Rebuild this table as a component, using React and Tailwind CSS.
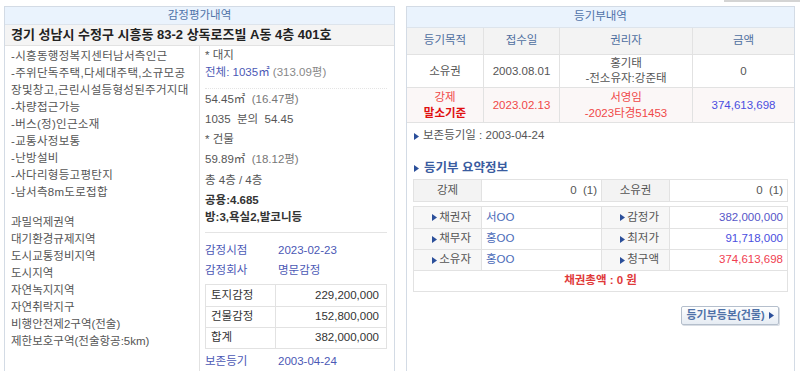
import React from "react";

const font = { fontFamily: '"Liberation Sans", "Noto Sans CJK KR", sans-serif' };

const Tri = ({ className = "" }) => (
  <svg width="5" height="7" viewBox="0 0 5 7" className={className}>
    <path d="M0 0 L5 3.5 L0 7 Z" fill="#2b4f9a" />
  </svg>
);

const leftLines = [
  "-시흥동행정복지센터남서측인근",
  "-주위단독주택,다세대주택,소규모공",
  "장및창고,근린시설등형성된주거지대",
  "-차량접근가능",
  "-버스(정)인근소재",
  "-교통사정보통",
  "-난방설비",
  "-사다리형등고평탄지",
  "-남서측8m도로접합",
];

const zones = [
  "과밀억제권역",
  "대기환경규제지역",
  "도시교통정비지역",
  "도시지역",
  "자연녹지지역",
  "자연취락지구",
  "비행안전제2구역(전술)",
  "제한보호구역(전술항공:5km)",
];

const Appraisal = () => (
  <div className="w-[391px] h-[366px] border border-[#d3dbe5] flex flex-col bg-white">
    <div className="h-[21px] bg-[#eaf3fd] border-b border-[#dde4ec] flex items-center justify-center text-[11.5px] text-[#4f72a8]">
      감정평가내역
    </div>
    <div className="h-[25px] bg-[#f4f4f4] border-b border-[#e2e2e2] flex items-center pl-[6px] text-[13px] font-bold text-[#222]">
      경기 성남시 수정구 시흥동 83-2 상독로즈빌 A동 4층 401호
    </div>
    <div className="flex flex-1 text-[11.5px] text-[#555]">
      <div className="w-[195px] border-r border-[#e2e2e2] pl-[6px] pt-[2px] leading-[17px]">
        {leftLines.map((l) => (
          <div key={l} className="whitespace-nowrap tracking-[0.3px]">{l}</div>
        ))}
        <div className="h-[13px]" />
        {zones.map((l) => (
          <div key={l} className="whitespace-nowrap">{l}</div>
        ))}
      </div>
      <div className="flex-1 pl-[5px] pr-[7px]">
        <div className="h-[18px] leading-[18px]">* 대지</div>
        <div className="h-[17px] leading-[17px]">
          <span className="text-[#4b58b5]">전체: 1035㎡</span>
          <span className="text-[#888]"> (313.09평)</span>
        </div>
        <div className="h-[8px] border-b border-dotted border-[#e4e4e4]" />
        <div className="h-[20px] leading-[20px]">
          54.45㎡ <span className="text-[#777]">&nbsp;(16.47평)</span>
        </div>
        <div className="h-[20px] leading-[20px]">1035 &nbsp;분의 &nbsp;54.45</div>
        <div className="h-[21px] leading-[21px]">* 건물</div>
        <div className="h-[19px] leading-[19px]">
          59.89㎡ <span className="text-[#777]">&nbsp;(18.12평)</span>
        </div>
        <div className="h-[22px] leading-[22px]">총 4층 / 4층</div>
        <div className="h-[19px] leading-[19px] font-bold text-[#333]">공용:4.685</div>
        <div className="h-[15px] leading-[15px] font-bold text-[#333]">방:3,욕실2,발코니등</div>
        <div className="h-[8px] border-b border-[#e4e4e4]" />
        <div className="h-[7px]" />
        <div className="h-[20px] leading-[20px] flex text-[#4b58b5]">
          <span className="w-[73px]">감정시점</span>
          <span>2023-02-23</span>
        </div>
        <div className="h-[21px] leading-[21px] flex text-[#4b58b5]">
          <span className="w-[73px]">감정회사</span>
          <span>명문감정</span>
        </div>
        <div className="mt-[3px] border border-[#e2e2e2] text-[#333]">
          {[
            ["토지감정", "229,200,000"],
            ["건물감정", "152,800,000"],
            ["합계", "382,000,000"],
          ].map(([k, v], i) => (
            <div key={k} className={`flex h-[21px] items-center ${i ? "border-t border-[#e2e2e2]" : ""}`}>
              <div className="w-[70px] h-full flex items-center pl-[5px] border-r border-[#e2e2e2]">{k}</div>
              <div className="flex-1 text-right pr-[7px]">{v}</div>
            </div>
          ))}
        </div>
        <div className="h-[22px] leading-[24px] flex text-[#4b58b5]">
          <span className="w-[73px]">보존등기</span>
          <span>2003-04-24</span>
        </div>
      </div>
    </div>
  </div>
);

const th = "flex items-center justify-center border-r border-[#e2e2e2]";

const Registry = () => (
  <div className="w-[389px] h-[366px] border border-[#d3dbe5] flex flex-col bg-white text-[11.5px] text-[#555]">
    <div className="h-[21px] bg-[#eaf3fd] border-b border-[#dde4ec] flex items-center justify-center text-[#4f72a8]">
      등기부내역
    </div>
    <div className="flex h-[27px] bg-[#f3f3f3] border-b border-[#e2e2e2] text-[#4f6fa0]">
      <div className={`${th} w-[77px]`}>등기목적</div>
      <div className={`${th} w-[76px]`}>접수일</div>
      <div className={`${th} w-[133px]`}>권리자</div>
      <div className="flex-1 flex items-center justify-center">금액</div>
    </div>
    <div className="flex h-[33px] border-b border-[#e2e2e2] leading-[15px]">
      <div className={`${th} w-[77px]`}>소유권</div>
      <div className={`${th} w-[76px]`}>2003.08.01</div>
      <div className={`${th} w-[133px] flex-col`}>
        <span>홍기태</span>
        <span>-전소유자:강준태</span>
      </div>
      <div className="flex-1 flex items-center justify-center">0</div>
    </div>
    <div className="flex h-[35px] border-b border-[#e2e2e2] bg-[#fbf7f7] leading-[16px] text-[#f04848]">
      <div className={`${th} w-[77px] flex-col`}>
        <span>강제</span>
        <span className="font-bold text-[#e01010]">말소기준</span>
      </div>
      <div className={`${th} w-[76px]`}>2023.02.13</div>
      <div className={`${th} w-[133px] flex-col`}>
        <span>서영임</span>
        <span>-2023타경51453</span>
      </div>
      <div className="flex-1 flex items-center justify-center text-[#4a4ee0]">374,613,698</div>
    </div>

    <div className="px-[6px]">
      <div className="flex items-center gap-[4px] h-[24px] mt-[1px] pl-[1px]">
        <Tri />
        <span>보존등기일 : 2003-04-24</span>
      </div>
      <div className="flex items-center gap-[5px] h-[18px] mt-[11px] pl-[1px]">
        <Tri />
        <span className="font-bold text-[12.5px] text-[#3a5ca0]">등기부 요약정보</span>
      </div>
      <div className="flex h-[23px] mt-[2px] border border-[#e2e2e2]">
        <div className="w-[68px] bg-[#f3f3f3] border-r border-[#e2e2e2] flex items-center justify-center">강제</div>
        <div className="w-[120px] border-r border-[#e2e2e2] flex items-center justify-end pr-[4px]">0 &nbsp;(1)</div>
        <div className="w-[68px] bg-[#f3f3f3] border-r border-[#e2e2e2] flex items-center justify-center">소유권</div>
        <div className="flex-1 flex items-center justify-end pr-[4px]">0 &nbsp;(1)</div>
      </div>
      <div className="mt-[4px] border border-[#e2e2e2]">
        {[
          ["채권자", "서OO", "감정가", "382,000,000", "text-[#5656c8]"],
          ["채무자", "홍OO", "최저가", "91,718,000", "text-[#4a4ee0]"],
          ["소유자", "홍OO", "청구액", "374,613,698", "text-[#f04050]"],
        ].map(([a, b, c, d, col], i) => (
          <div key={a} className={`flex h-[21px] ${i ? "border-t border-[#e2e2e2]" : ""}`}>
            <div className="w-[68px] bg-[#f7f7f7] border-r border-[#e2e2e2] flex items-center justify-end pr-[10px] gap-[2px]">
              <Tri />
              <span>{a}</span>
            </div>
            <div className="w-[120px] border-r border-[#e2e2e2] flex items-center pl-[4px] text-[#4a6ab8]">{b}</div>
            <div className="w-[68px] bg-[#f7f7f7] border-r border-[#e2e2e2] flex items-center justify-end pr-[10px] gap-[2px]">
              <Tri />
              <span>{c}</span>
            </div>
            <div className={`flex-1 flex items-center justify-end pr-[4px] ${col}`}>{d}</div>
          </div>
        ))}
        <div className="h-[21px] border-t border-[#e2e2e2] flex items-center justify-center font-bold text-[#e03a3a]">
          채권총액 : 0 원
        </div>
      </div>
      <div className="flex justify-end mt-[14px] pr-[9px]">
        <div className="h-[19px] w-[98px] border border-[#b5bfcc] rounded-[2px] bg-gradient-to-b from-white to-[#e6ecf3] flex items-center justify-center gap-[4px] text-[11px] font-bold text-[#4f72a8] shadow-[1px_1px_0_#d8dde4]">
          <span>등기부등본(건물)</span>
          <Tri />
        </div>
      </div>
    </div>
  </div>
);

export default function App() {
  return (
    <div className="w-[800px] h-[371px] overflow-hidden bg-white" style={font}>
      <div className="h-[6px] flex justify-end">
        <div className="w-[76px] h-[2px] bg-[#d4d4d4]" />
      </div>
      <div className="flex pl-[4px] gap-[11px]">
        <Appraisal />
        <Registry />
      </div>
    </div>
  );
}
